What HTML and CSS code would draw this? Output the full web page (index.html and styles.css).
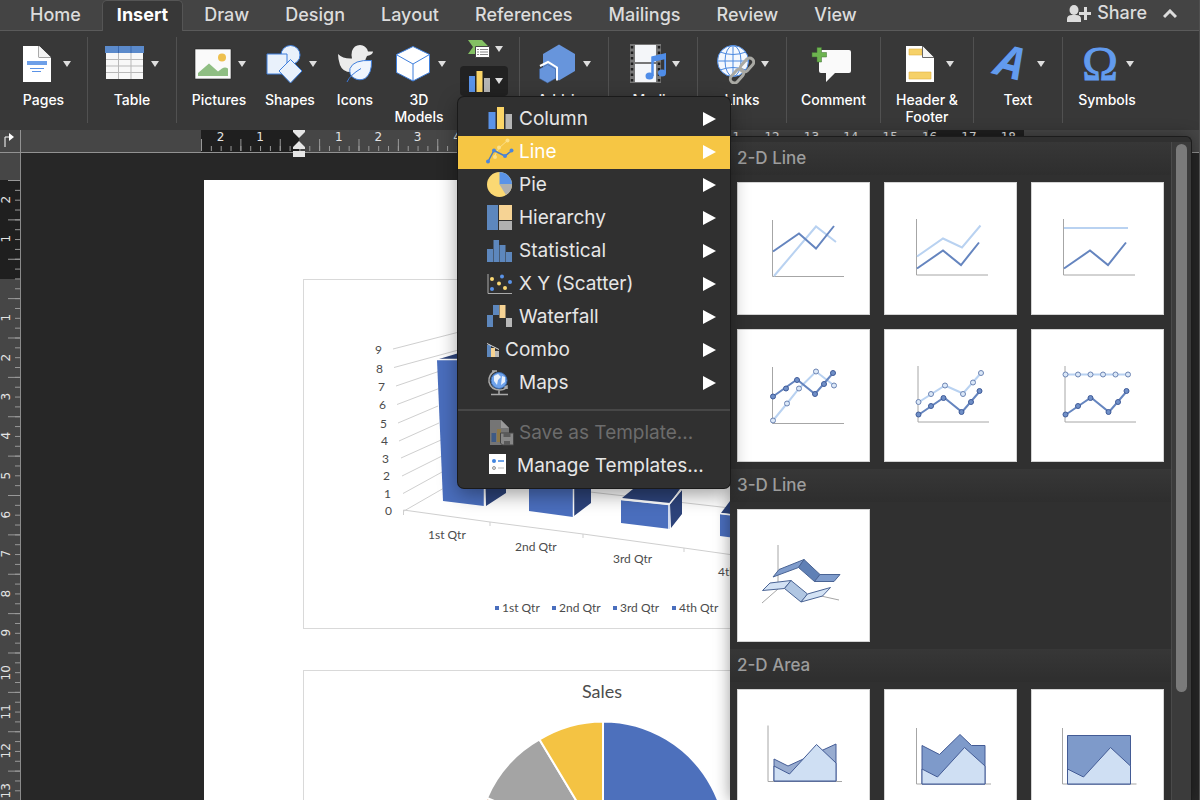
FILE: index.html
```html
<!DOCTYPE html>
<html lang="en">
<head>
<meta charset="utf-8">
<title>Document</title>
<link rel="stylesheet" href="styles.css">
</head>
<body>
<div class="window">
<nav class="tabs">
  <button class="tab">Home</button>
  <button class="tab tab-active">Insert</button>
  <button class="tab">Draw</button>
  <button class="tab">Design</button>
  <button class="tab">Layout</button>
  <button class="tab">References</button>
  <button class="tab">Mailings</button>
  <button class="tab">Review</button>
  <button class="tab">View</button>
  <button class="share">
    <svg width="24" height="18" viewBox="1068 4 24 18" fill="#dcdcdc"><ellipse cx="1075" cy="10" rx="4.5" ry="5"/><path d="M1068 22v-3q0-4 5-4h4q5 0 5 4v3z"/><path d="M1080 12h5V7h3v5h4.500v3H1088v5h-3v-5h-5z"/></svg>
    Share
  </button>
  <button class="collapse" aria-label="Collapse ribbon"><svg width="14" height="10" viewBox="0 0 14 10" fill="none" stroke="#dcdcdc" stroke-width="3"><path d="M1 8l6-6 6 6"/></svg></button>
</nav>

<div class="ribbon">
  <div class="group g-88">
    <button class="tool"><span class="tool-icon"><svg viewBox="17 44 40 40" width="40" height="40"><path d="M23 46h16l12 12v24H23z" fill="#fff"/><path d="M39 46v11.500h12" fill="#e8e8e8" stroke="#555"/><path d="M39 46l12 11.500H39z" fill="#f4f4f4"/><path d="M27 61h20v4H27z" fill="#6d9fe8"/><path d="M30 68.500h14M32 71.500h9" stroke="#5a92e6"/></svg><i class="arrow"></i></span><span>Pages</span></button>
  </div>
  <div class="group g-89">
    <button class="tool"><span class="tool-icon"><svg viewBox="106 44 40 40" width="40" height="40"><path d="M107 52h37v27h-37z" fill="#f8f8f8"/><path d="M107 59.500h37M107 66h37M107 72.500h37M119.500 53v26M132 53v26" stroke="#b9b9b9"/><path d="M106 46h39v7h-39z" fill="#5b8acb"/><path d="M119.500 46v7M132 46v7" stroke="#3c68ad"/></svg><i class="arrow"></i></span><span>Table</span></button>
  </div>
  <div class="group g-344">
    <button class="tool t-72"><span class="tool-icon"><svg viewBox="193 44 40 40" width="40" height="40"><path d="M196 49h36v30h-36z" fill="#fafafa" stroke="#222" stroke-width=".6"/><circle cx="223" cy="57.500" r="4" fill="#eec04e"/><path d="M199 76v-3l11-9.500 9 8 4-3q3-2 6 0V76z" fill="#8fbe83"/></svg><i class="arrow"></i></span><span>Pictures</span></button>
    <button class="tool t-70"><span class="tool-icon"><svg viewBox="264 44 40 40" width="40" height="40" fill="#e9f1fb" stroke="#3f7fdc"><circle cx="291.500" cy="55" r="9.500"/><path d="M268 54h20v20h-20z"/><path d="M291.500 59.500L303 71l-11.500 12L280 71z"/></svg><i class="arrow"></i></span><span>Shapes</span></button>
    <button class="tool t-60"><span class="tool-icon"><svg viewBox="335 44 40 40" width="40" height="40"><path d="M338 54q5 5 14 4.500Q351 55 352 51q2-6 8-6t8 6.500h5q0 3-6 4.500-2 3-2 7l-12 9q-10 1-13-7-2-6-2-11z" fill="#ececec"/><path d="M371.500 60.500q-18-1-21.500 8-1 6 3 9 6 4 12 1 7-5 6.500-18z" fill="#eff5fd" stroke="#3f7fdc"/><path d="M347 82q3-7 14-13.500" fill="none" stroke="#3b7ade"/></svg></span><span>Icons</span></button>
    <button class="tool t-68"><span class="tool-icon"><svg viewBox="393 44 40 40" width="40" height="40" fill="#fff" stroke="#3f7fdc"><path d="M414 46.500l16.500 8v18L414 81l-16.500-8.500v-18z"/><path d="M414 81V64l16.500-9.500M414 64l-16-9" fill="none"/></svg><i class="arrow"></i></span><span>3D<br>Models</span></button>
    <div class="stack">
      <button class="mini" aria-label="SmartArt"><svg viewBox="466 38 26 22" width="26" height="22"><path d="M468 40h14l7 7-7 7h-14l5-7z" fill="#83c063"/><path d="M475.500 46.500h14v11h-14z" fill="#fff" stroke="#444"/><path d="M477 49.500h2m1 0h8m-11 2.500h2m1 0h8m-11 2.500h2m1 0h8" stroke="#888"/></svg><i class="arrow"></i></button>
      <button class="mini mini-on" aria-label="Chart"><svg viewBox="466 68 26 24" width="26" height="24"><path d="M469 75h6v16h-6z" fill="#5a93e8"/><path d="M476.500 70h6v21h-6z" fill="#fbd567"/><path d="M484 77h6v14h-6z" fill="#b5b5b5"/></svg><i class="arrow"></i></button>
    </div>
  </div>
  <div class="group g-89">
    <button class="tool"><span class="tool-icon"><svg viewBox="538 44 40 40" width="40" height="40" fill="#6795dc"><path d="M560 44.500l16 9.500v17l-16 9.500L544 71V54z"/><path d="M541 66l8-4 9 5.500v13" fill="none" stroke="#fff" stroke-width="2"/><path d="M548.500 64.500l8 4.500v9.500l-8 4.500-8-4.500V69z" stroke="#38598f" stroke-width=".5"/></svg><i class="arrow"></i></span><span>Add-ins</span></button>
  </div>
  <div class="group g-89">
    <button class="tool"><span class="tool-icon"><svg viewBox="626 44 40 40" width="40" height="40"><path d="M630 44h31v39h-31z" fill="#777"/><path d="M632 46v36M659 46v36" stroke="#1f1f1f" stroke-width="2.500" stroke-dasharray="2.500 3"/><path d="M635 45h21v17h-21zM635 64h21v18h-21z" fill="#f4f6f9"/><path d="M652.500 76V57.500l13-3V73" fill="none" stroke="#4f8de8" stroke-width="2.500"/><path d="M652 57l14-3v5l-14 3z" fill="#4f8de8"/><ellipse cx="649.500" cy="76" rx="4" ry="3.500" fill="#4f8de8"/><ellipse cx="662" cy="73" rx="4" ry="3.500" fill="#4f8de8"/></svg><i class="arrow"></i></span><span>Media</span></button>
  </div>
  <div class="group g-89">
    <button class="tool"><span class="tool-icon"><svg viewBox="715 44 40 40" width="40" height="40" fill="none"><circle cx="733" cy="61" r="15.500" fill="#f4f8fe" stroke="#4d8ae0"/><path d="M733 45v32M717 61h32M720 52q13 5 26 0M720 70q13-5 26 0" stroke="#4d8ae0"/><ellipse cx="733" cy="61" rx="8" ry="15.500" stroke="#4d8ae0"/><g stroke="#a9a9a4" stroke-width="3"><rect x="729" y="72" width="16" height="8" rx="4" transform="rotate(-48 737 76)"/><rect x="739" y="61" width="16" height="8" rx="4" transform="rotate(-48 747 65)"/></g></svg><i class="arrow"></i></span><span>Links</span></button>
  </div>
  <div class="group g-94">
    <button class="tool"><span class="tool-icon"><svg viewBox="811 44 44 40" width="44" height="40"><path d="M821 50h28q2 0 2 2v19q0 2-2 2h-14l-9 9v-9h-5q-2 0-2-2V52q0-2 2-2z" fill="#fafafa"/><path d="M817 47.500h4.500v5h5v4.500h-5v5H817v-5h-5v-4.500h5z" fill="#6db44f" stroke="#3f6e33" stroke-width=".5"/></svg></span><span>Comment</span></button>
  </div>
  <div class="group g-93">
    <button class="tool"><span class="tool-icon"><svg viewBox="900 44 40 40" width="40" height="40"><path d="M906 46h16l12 12v24h-28z" fill="#fff"/><path d="M909 49h13v6h-13zM909 72h22v7h-22z" fill="#f6d168" stroke="#e2b440" stroke-width=".6"/><path d="M922.500 46v11.500H934" fill="#f5f5f5" stroke="#666"/></svg><i class="arrow"></i></span><span>Header &amp;<br>Footer</span></button>
  </div>
  <div class="group g-89">
    <button class="tool"><span class="tool-icon"><svg class="spill" viewBox="990 44 40 40" width="40" height="40"><text x="995" y="78" class="glyph-a" transform="rotate(15 1010 64)">A</text></svg><i class="arrow"></i></span><span>Text</span></button>
  </div>
  <div class="group g-88 g-last">
    <button class="tool"><span class="tool-icon"><svg class="spill" viewBox="1079 44 40 40" width="40" height="40"><text x="1099" y="80" text-anchor="middle" class="glyph-o">Ω</text></svg><i class="arrow"></i></span><span>Symbols</span></button>
  </div>
</div>

<div class="ruler-h">
  <span class="corner"><svg viewBox="0 0 20 22" width="20" height="22"><path d="M5 17V7h6" fill="none" stroke="#fff"/><path d="M9 3l5 4-5 4z" fill="#fff"/></svg></span>
  <span class="lead"></span>
  <div class="track-h">
    <span>2</span><span>1</span><span class="indent"><svg viewBox="0 0 14 28" width="14" height="28" fill="#e6e6e6"><path d="M1 0h12v2L7 8 1 2zM7 11l6 6v2H1v-2zM1 21h12v6H1z"/></svg></span><span>1</span><span>2</span><span>3</span><span>4</span><span>5</span><span>6</span><span>7</span><span>8</span><span>9</span><span>10</span><span>11</span><span>12</span><span>13</span><span>14</span><span>15</span><span>16</span><span>17</span><span>18</span>
  </div>
</div>

<div class="work">
  <div class="ruler-v">
    <div class="track-v">
      <span>2</span><span>1</span><span></span><span>1</span><span>2</span><span>3</span><span>4</span><span>5</span><span>6</span><span>7</span><span>8</span><span>9</span><span>10</span><span>11</span><span>12</span><span>13</span>
    </div>
  </div>
  <main class="canvas">
    <article class="page">
      <figure class="chart">
        <svg viewBox="304 280 626 348" width="626" height="348">
          <g fill="none" stroke="#cfcfcf">
            <path d="M393 349l70-18M394 367.500l70-19M396 386l44-15M397 404.500l42-16M398 423l40-17M399 441l40-18M401 458l40-18M402 476l40-20M403 493.500l40-22M404 511l40-23"/>
            <path d="M403.500 515v-5l86.500 12 93 12 101 14 120 17M490 522v4M583 534v4M684 548v4"/>
            <path d="M590 492l140 16"/>
          </g>
          <g fill="#4a6ebd">
            <path d="M437 360h47v146l-41-5z"/><path d="M529 470h44v47l-44-6z"/><path d="M621 500l49 5v24l-49-6z"/><path d="M720 514l60 6v24l-60-8z"/>
          </g>
          <g fill="#2d437a">
            <path d="M439 359l20-6v6zM485 470l21 6v17l-20 13zM574 470h17v33l-17 13zM622 498l11-9h47l-10 14zM670 504l12-14v24l-11 14zM721 513l9-12h50v18z"/>
          </g>
          <path d="M437 359.500h40M484.500 480v27M573.500 480v37M621 499.500l48 5v25M669 504.500l12-14.500M720 513.500l40 5" fill="none" stroke="#fff" stroke-width="1.500"/>
          <g class="axis">
            <text x="375" y="354">9</text><text x="376" y="373">8</text><text x="378" y="391">7</text><text x="379" y="409">6</text><text x="380" y="428">5</text><text x="381" y="445">4</text><text x="382" y="463">3</text><text x="383" y="480">2</text><text x="384" y="498">1</text><text x="385" y="515">0</text>
            <text x="428" y="539">1st Qtr</text><text x="515" y="551">2nd Qtr</text><text x="613" y="563">3rd Qtr</text><text x="718" y="576">4th Qtr</text>
            <text x="502" y="612">1st Qtr</text><text x="559" y="612">2nd Qtr</text><text x="620" y="612">3rd Qtr</text><text x="679" y="612">4th Qtr</text>
          </g>
          <path d="M495 606h4v4h-4zM552 606h4v4h-4zM613 606h4v4h-4zM672 606h4v4h-4z" fill="#4a6ebd"/>
        </svg>
      </figure>
      <figure class="chart">
        <svg viewBox="304 671 626 348" width="626" height="348">
          <text x="602" y="698" text-anchor="middle" class="chart-title">Sales</text>
          <g stroke="#fff" stroke-width="2">
            <path d="M603 845V721.500A123.500 123.500 0 0 1 706 913z" fill="#4d70bc"/>
            <path d="M603 845l-61 107A123.500 123.500 0 0 1 487 798z" fill="#e0792f"/>
            <path d="M603 845l-116-47A123.500 123.500 0 0 1 539.500 739.500z" fill="#a4a4a4"/>
            <path d="M603 845L539.500 739.500A123.500 123.500 0 0 1 603 721.500z" fill="#f4c343"/>
          </g>
        </svg>
      </figure>
    </article>
  </main>
</div>

<div class="menu" role="menu">
  <button class="item" role="menuitem"><svg class="ico" viewBox="486 105 28 28"><path d="M488.500 112h7v17h-7z" fill="#5a93e8"/><path d="M497 107h7v22h-7z" fill="#fbd567"/><path d="M505.500 114h6.500v15h-6.500z" fill="#b5b5b5"/></svg><span>Column</span><i class="more"></i></button>
  <button class="item item-on" role="menuitem"><svg class="ico" viewBox="486 138 28 28"><path d="M494 157l5-9 9-8" fill="none" stroke="#fbe08b"/><g fill="#fbe08b"><circle cx="495" cy="157" r="2"/><circle cx="499" cy="147.500" r="2"/><circle cx="507.500" cy="140.500" r="2"/></g><path d="M488 161.500l6-11 11 5.500 7-5.500" fill="none" stroke="#4b7cc0" stroke-width="1.500"/><g fill="#4a85dd"><circle cx="488" cy="161.500" r="2"/><circle cx="494" cy="150.500" r="2"/><circle cx="505" cy="156" r="2"/><circle cx="511.500" cy="150.500" r="2"/></g></svg><span>Line</span><i class="more"></i></button>
  <button class="item" role="menuitem"><svg class="ico" viewBox="486 171 28 28"><circle cx="499.500" cy="184.500" r="12.500" fill="#fbd873"/><path d="M499.500 184.500V172a12.500 12.500 0 0 1 12.500 12.500z" fill="#5a93e8"/><path d="M499.500 184.500H512a12.500 12.500 0 0 1-6 10.500z" fill="#b0b0b0"/></svg><span>Pie</span><i class="more"></i></button>
  <button class="item" role="menuitem"><svg class="ico" viewBox="486 204 28 28"><path d="M487 205h11v25h-11z" fill="#5d87bd"/><path d="M499 205h13v15h-13z" fill="#f6d394"/><path d="M499 221h13v9h-13z" fill="#b0b0b0"/></svg><span>Hierarchy</span><i class="more"></i></button>
  <button class="item" role="menuitem"><svg class="ico" viewBox="486 237 28 28"><path d="M487 249h6v13h-6zM493.500 240h5.500v22h-5.500zM499.500 245h6v17h-6zM506 252h6v10h-6z" fill="#5d87bd"/></svg><span>Statistical</span><i class="more"></i></button>
  <button class="item" role="menuitem"><svg class="ico" viewBox="486 270 28 28"><path d="M488 274v19.500h24" fill="none" stroke="#aaa"/><g fill="#fbd873"><circle cx="492" cy="279" r="2"/><circle cx="499" cy="283.500" r="2"/><circle cx="505" cy="288" r="2"/></g><g fill="#5a93e8"><circle cx="502" cy="276.500" r="2"/><circle cx="510" cy="282" r="2"/><circle cx="492" cy="289" r="2"/></g></svg><span>X Y (Scatter)</span><i class="more"></i></button>
  <button class="item" role="menuitem"><svg class="ico" viewBox="486 304 28 28"><path d="M487 316h6v12h-6zM493 306h6v10h-6z" fill="#5d87bd"/><path d="M499.500 306h6v13h-6z" fill="#f6d394"/><path d="M506 319h6v9h-6z" fill="#b8b8b8"/></svg><span>Waterfall</span><i class="more"></i></button>
  <button class="item" role="menuitem"><svg class="ico-s" viewBox="486 341 14 16"><path d="M487 344h4v12h-4z" fill="#5d87bd"/><path d="M491 347h4v9h-4z" fill="#f6d394"/><path d="M495 350h4v6h-4z" fill="#b8b8b8"/><path d="M487 342.500l6 3 6 3" fill="none" stroke="#ddd"/></svg><span>Combo</span><i class="more"></i></button>
  <button class="item" role="menuitem"><svg class="ico" viewBox="486 369 28 28"><path d="M495 371q-7 4-6 11 2 8 11 8 4 0 7-3M499 390v4M491 394.500h17M492 371h5M504 387l3-1v3" fill="none" stroke="#a9a9a9" stroke-width="1.500"/><circle cx="499" cy="380.500" r="8" fill="#6fa3ec" stroke="#3e6eb2"/><path d="M494 376l4-2 3 3-3 3-1 5-3-4zM502 376l3 1v5l-4 3z" fill="#e8f0fb"/></svg><span>Maps</span><i class="more"></i></button>
  <hr class="rule">
  <button class="item" role="menuitem" disabled><svg class="ico" viewBox="486 419 28 28"><path d="M490 420h11l8 8v17h-19z" fill="#757575"/><path d="M501 420v8h8z" fill="#999"/><path d="M491.500 433h4.500v9h-4.500z" fill="#3d5a85"/><path d="M497 429h4v13h-4z" fill="#8b7747"/><path d="M500.500 433h13v12h-11l-2-2z" fill="#888" stroke="#444"/><path d="M503.500 433h7v4h-7zM504 441h6v4h-6z" fill="#5a5a5a"/></svg><span>Save as Template...</span></button>
  <button class="item" role="menuitem"><svg class="ico-m" viewBox="487 452 26 28"><path d="M490 454h17v20h-17z" fill="#fff"/><circle cx="495" cy="461" r="2" fill="#3f84e0"/><path d="M499 461h6" stroke="#3f84e0" stroke-width="1.500"/><circle cx="495" cy="468" r="1.500" fill="#ddd" stroke="#999"/><path d="M499 468h6" stroke="#bbb"/></svg><span>Manage Templates...</span></button>
</div>

<div class="gallery">
  <div class="gallery-body">
    <h2>2-D Line</h2>
    <div class="tiles">
      <button class="tile" aria-label="Line"><svg viewBox="737 182 133 133"><path class="ax" d="M772.500 220v56.500H844"/><path class="lt" d="M774 276l42-49.500 20 15.500"/><path class="dk" d="M773 251.500l26-18 17 15 18-22.500"/></svg></button>
      <button class="tile" aria-label="Stacked line"><svg viewBox="884 182 133 133"><path class="ax" d="M916.500 219v56H988"/><path class="lt" d="M917 256.500l26-18 19 9 18.500-22"/><path class="dk" d="M917 268.500l26-18 18 14.500 18-22.500"/></svg></button>
      <button class="tile" aria-label="100% stacked line"><svg viewBox="1031 182 133 133"><path class="ax" d="M1063.500 219v56H1135"/><path class="lt" d="M1064 228h64"/><path class="dk" d="M1064 268.500l26-18 18 14.500 18-22.500"/></svg></button>
      <button class="tile" aria-label="Line with markers"><svg viewBox="737 329 133 133"><path class="ax" d="M772.500 367v56.500H844"/><path class="lt" d="M773 420.500l14-17 12-15 17-17 18 14"/><path class="dk" d="M773 396.500l24-17 18 14.500 18-21"/><g class="ml"><circle cx="773" cy="420.500" r="2.500"/><circle cx="787" cy="403.500" r="2.500"/><circle cx="799" cy="388.500" r="2.500"/><circle cx="816" cy="371.500" r="2.500"/><circle cx="834" cy="385.500" r="2.500"/></g><g class="md"><circle cx="773" cy="396.500" r="2.500"/><circle cx="786" cy="388.500" r="2.500"/><circle cx="797" cy="380" r="2.500"/><circle cx="815" cy="394" r="2.500"/><circle cx="824" cy="384" r="2.500"/><circle cx="833" cy="373" r="2.500"/></g></svg></button>
      <button class="tile" aria-label="Stacked line with markers"><svg viewBox="884 329 133 133"><path class="ax" d="M918 366v56h71"/><path class="lt" d="M919 402l26-16.500 18 8 18-20.500"/><path class="dk" d="M919 414.500l25-17 18 14.500 18-21"/><g class="ml"><circle cx="918.500" cy="402" r="2.500"/><circle cx="931" cy="394" r="2.500"/><circle cx="945" cy="385.500" r="2.500"/><circle cx="963" cy="394" r="2.500"/><circle cx="973" cy="382.500" r="2.500"/><circle cx="981" cy="373" r="2.500"/></g><g class="md"><circle cx="918.500" cy="414.500" r="2.500"/><circle cx="931" cy="406" r="2.500"/><circle cx="943.500" cy="398" r="2.500"/><circle cx="961.500" cy="412" r="2.500"/><circle cx="971" cy="402" r="2.500"/><circle cx="979.500" cy="391" r="2.500"/></g></svg></button>
      <button class="tile" aria-label="100% stacked line with markers"><svg viewBox="1031 329 133 133"><path class="ax" d="M1065 366v56h71"/><path class="lt" d="M1065 374.500h63"/><path class="dk" d="M1066 414.500l25-17 18 14.500 18-21"/><g class="ml"><circle cx="1065.500" cy="374.500" r="2.500"/><circle cx="1078" cy="374.500" r="2.500"/><circle cx="1090.500" cy="374.500" r="2.500"/><circle cx="1103" cy="374.500" r="2.500"/><circle cx="1115.500" cy="374.500" r="2.500"/><circle cx="1128" cy="374.500" r="2.500"/></g><g class="md"><circle cx="1065.500" cy="414.500" r="2.500"/><circle cx="1078" cy="406" r="2.500"/><circle cx="1090.500" cy="398" r="2.500"/><circle cx="1108.500" cy="412" r="2.500"/><circle cx="1118" cy="402" r="2.500"/><circle cx="1126.500" cy="391" r="2.500"/></g></svg></button>
    </div>
    <h2>3-D Line</h2>
    <div class="tiles">
      <button class="tile" aria-label="3-D line"><svg viewBox="737 509 133 133"><path class="ax" d="M778 545v44l-16 14M821 596l18 4"/><g stroke="#4a6494" stroke-linejoin="round"><path d="M773 577l6-7.500 25-10-5.500 8z" fill="#7f9ccc"/><path d="M804 559.500l16 15-5.500 7-16-14z" fill="#5f80b5"/><path d="M820 574.500h20l-6 7h-19.500z" fill="#7f9ccc"/><path d="M762.500 590.500l7.500-7.500 21-2.500-6.500 8z" fill="#d3e2f4"/><path d="M791 580.500l16.500 13.500-6.500 8-16.500-13.500z" fill="#b0c6e2"/><path d="M807.500 594l23-6.500-8 8.500-21.500 6z" fill="#d3e2f4"/></g></svg></button>
    </div>
    <h2>2-D Area</h2>
    <div class="tiles">
      <button class="tile" aria-label="Area"><svg viewBox="737 689 133 133"><path class="ax" d="M768 725.500v56h74"/><g stroke="#435b95"><path d="M774 781v-22l14 7 48-22v37z" fill="#98acd0"/><path d="M774 781v-15l15.500 8 27-29.500 19.500 18.500v18z" fill="#cfdff3"/></g></svg></button>
      <button class="tile" aria-label="Stacked area"><svg viewBox="884 689 133 133"><path class="ax" d="M916.500 728v56H991"/><g stroke="#435b95"><path d="M922 784v-38.500l17.500 9L960 734.500l11.500 11H985V784z" fill="#7e9aca"/><path d="M922 784v-15l15.500 8 27-29.500L985 766v18z" fill="#cfdff3"/></g></svg></button>
      <button class="tile" aria-label="100% stacked area"><svg viewBox="1031 689 133 133"><path class="ax" d="M1062.500 728v56h74"/><g stroke="#435b95"><path d="M1067.500 784v-48.500h63V784z" fill="#7e9aca"/><path d="M1067.500 784v-15l16 8 27-29.500 20 18.500v18z" fill="#cfdff3"/></g></svg></button>
    </div>
  </div>
  <div class="scroll"><div class="thumb"></div></div>
</div>
</div>
</body>
</html>
```
FILE: styles.css
```css
* { box-sizing: border-box; }
body {
  margin: 0;
  background: #272727;
  font-family: Inter, "Liberation Sans", sans-serif;
  color: #fff;
}
button {
  border: 0;
  padding: 0;
  background: none;
  color: inherit;
  font: inherit;
}
svg { display: block; flex: none; }

.window {
  position: relative;
  display: flex;
  flex-direction: column;
  height: 100vh;
  overflow: hidden;
  border-right: 1px solid #505050;
}

/* tab strip */
.tabs {
  display: flex;
  flex: none;
  height: 31px;
  padding-left: 12px;
  background: #444;
  border-bottom: 1px solid #5a5a5a;
  font-size: 18px;
  font-weight: 500;
  line-height: 20px;
  color: #dcdcdc;
}
.tab {
  height: 31px;
  padding: 0 18px 2px;
}
.tab-active {
  background: #383838;
  border: 1px solid #555;
  border-bottom: 0;
  border-radius: 5px 5px 0 0;
  padding: 0 14px 2px;
  margin: 0 3px;
  font-weight: 700;
  color: #fff;
}
.share {
  display: flex;
  align-items: center;
  gap: 6px;
  margin-left: auto;
  padding-bottom: 4px;
}
.collapse { margin: 0 22px 2px 16px; }

/* ribbon */
.ribbon {
  display: flex;
  flex: none;
  height: 99px;
  padding: 6px 0 7px;
  background: #383838;
  font-size: 14px;
  font-weight: 500;
  line-height: 17px;
}
.group {
  display: flex;
  justify-content: center;
  border-right: 1px solid #515151;
}
.g-88 { width: 88px; }
.g-89 { width: 89px; }
.g-93 { width: 93px; }
.g-94 { width: 94px; }
.g-344 {
  width: 343px;
  justify-content: flex-start;
  padding-left: 6px;
}
.g-last { border-right: 0; }
.tool {
  display: flex;
  flex-direction: column;
  align-items: center;
  padding-top: 7px;
  white-space: nowrap;
}
.t-60 { width: 60px; }
.t-68 { width: 68px; }
.t-70 { width: 70px; }
.t-72 { width: 72px; }
.tool-icon {
  display: flex;
  align-items: center;
  gap: 6px;
  height: 40px;
  margin-bottom: 7px;
}
.arrow {
  border: 4px solid transparent;
  border-top: 6px solid #dedede;
  border-bottom: 0;
}
.stack {
  display: flex;
  flex-direction: column;
  gap: 5px;
  margin-left: 7px;
}
.mini {
  display: flex;
  align-items: center;
  gap: 3px;
  width: 48px;
  height: 24px;
  padding-left: 6px;
}
.mini-on {
  height: 30px;
  border-radius: 4px;
  background: #222;
}
.spill { overflow: visible; }
.glyph-a {
  font: italic 700 45px "Open Sans", sans-serif;
  fill: #629bee;
}
.glyph-o {
  font: 48px "Liberation Serif", serif;
  fill: #629bee;
  stroke: #629bee;
}

/* rulers */
.ruler-h {
  display: flex;
  flex: none;
  height: 23px;
  background: #464646;
  border-bottom: 1px solid #929292;
}
.corner {
  width: 21px;
  border-right: 1px solid #929292;
}
.lead { width: 180px; }
.track-h {
  display: grid;
  grid-template-columns: repeat(21, 1fr);
  width: 827px;
  height: 22px;
  background:
    linear-gradient(90deg, #999 1px, transparent 1px) 0 9px / calc(100% / 21) 12px repeat-x,
    linear-gradient(90deg, #999 1px, transparent 1px) 0 16px / calc(100% / 84) 5px repeat-x,
    linear-gradient(90deg, #1f1f1f 98px, transparent 98px 727px, #1f1f1f 727px 823px, transparent 823px);
  font: 12px/15px "DejaVu Sans", sans-serif;
  text-align: center;
  color: #e4e4e4;
}
.indent {
  display: flex;
  justify-content: center;
  z-index: 1;
}
.work {
  display: flex;
  flex: 1;
  min-height: 0;
}
.ruler-v {
  flex: none;
  width: 21px;
  padding-top: 27px;
  overflow: hidden;
  background: #464646;
  border-right: 1px solid #8a8a8a;
}
.track-v {
  display: grid;
  grid-template-rows: repeat(16, 1fr);
  height: 630px;
  background:
    linear-gradient(#999 1px, transparent 1px) 8px 0 / 12px calc(100% / 16) repeat-y,
    linear-gradient(#999 1px, transparent 1px) 15px 0 / 5px calc(100% / 64) repeat-y,
    linear-gradient(#1f1f1f 99px, transparent 99px);
  font: 12px/13px "DejaVu Sans", sans-serif;
  text-align: center;
  color: #e4e4e4;
}
.track-v span {
  writing-mode: vertical-rl;
  transform: rotate(180deg);
  justify-self: start;
}

/* document */
.canvas {
  flex: 1;
  overflow: hidden;
  padding: 27px 0 0 183px;
}
.page {
  width: 824px;
  min-height: 1165px;
  padding: 99px;
  background: #fff;
}
.chart {
  margin: 0 0 41px;
  width: 628px;
  border: 1px solid #d9d9d9;
}
.axis {
  font: 12px Lato, sans-serif;
  fill: #4c4c4c;
}
.chart-title {
  font: 18px Lato, sans-serif;
  fill: #4c4c4c;
}

/* chart menu */
.menu {
  position: absolute;
  z-index: 2;
  left: 458px;
  top: 97px;
  width: 272px;
  padding: 6px 0 5px;
  background: #303030;
  border-radius: 6px;
  box-shadow: 0 0 0 1px #1a1a1a, 0 6px 20px rgba(0, 0, 0, .4);
  font-size: 19px;
  line-height: 24px;
  color: #e6e6e6;
}
.item {
  display: flex;
  align-items: center;
  gap: 5px;
  width: 100%;
  height: 33px;
  padding: 0 14px 1px 28px;
  white-space: nowrap;
}
.item-on {
  background: #f6c644;
  color: #fff;
}
.item:disabled { color: #6c6c6c; }
.ico { width: 28px; height: 28px; }
.ico-m { width: 26px; height: 28px; }
.ico-s { width: 14px; height: 16px; }
.more {
  margin-left: auto;
  border: 7px solid transparent;
  border-left: 13px solid #fff;
  border-right: 0;
}
.rule {
  height: 2px;
  margin: 9px 0 6px;
  border: 0;
  background: #474747;
}

/* chart gallery */
.gallery {
  position: absolute;
  z-index: 1;
  left: 730px;
  right: 7px;
  top: 136px;
  bottom: 0;
  display: flex;
  padding-top: 5px;
  overflow: hidden;
  background: #303030;
  border: 1px solid #1c1c1c;
  border-width: 1px 1px 0 0;
  border-radius: 0 6px 0 0;
  box-shadow: 0 0 16px rgba(0, 0, 0, .4);
}
.gallery-body { flex: 1; }
.gallery h2 {
  height: 33px;
  margin: 0;
  padding-left: 7px;
  background: linear-gradient(#373737, #2e2e2e);
  font-size: 17px;
  font-weight: 500;
  line-height: 33px;
  color: #9d9d9d;
}
.tiles {
  display: grid;
  grid-template-columns: repeat(3, 1fr);
  gap: 14px;
  padding: 7px;
}
.tile {
  aspect-ratio: 1;
  background: #fff;
  box-shadow: inset 0 0 0 1px #d4d4d4;
}
.tile svg { width: 100%; height: 100%; }
.ax { fill: none; stroke: #a6a6a6; }
.lt { fill: none; stroke: #b9d2f1; stroke-width: 2; }
.dk { fill: none; stroke: #6585bf; stroke-width: 2; }
.ml { fill: #dbe8f8; stroke: #6c84b3; }
.md { fill: #6f8fc7; stroke: #3f5b98; }
.scroll {
  flex: none;
  width: 20px;
  padding: 2px 4px;
  background: #3b3b3b;
  border-left: 1px solid #4a4a4a;
}
.thumb {
  height: 548px;
  border-radius: 6px;
  background: #7a7a7a;
}
```
